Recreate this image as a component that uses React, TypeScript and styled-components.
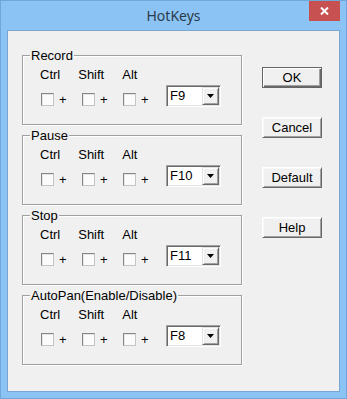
import React from "react";
import styled, { createGlobalStyle } from "styled-components";

const GlobalStyle = createGlobalStyle`
  html, body {
    margin: 0;
    padding: 0;
    background: #ffffff;
  }
  body {
    font-family: "Liberation Sans", Arial, sans-serif;
    font-size: 13px;
    color: #000;
  }
  * {
    box-sizing: border-box;
  }
`;

const groups = [
  { title: "Record", key: "F9" },
  { title: "Pause", key: "F10" },
  { title: "Stop", key: "F11" },
  { title: "AutoPan(Enable/Disable)", key: "F8" },
];

const buttons = ["OK", "Cancel", "Default", "Help"];

function App() {
  return (
    <>
      <GlobalStyle />
      <Window>
        <TitleBar>
          <Title>HotKeys</Title>
          <CloseButton aria-label="Close">
            <svg width="9" height="8" viewBox="0 0 9 8">
              <path d="M1 0.5 L8 7.5 M8 0.5 L1 7.5" stroke="#fff" strokeWidth="2" />
            </svg>
          </CloseButton>
        </TitleBar>

        <Client>
          <Groups>
            {groups.map((g) => (
              <Group key={g.title}>
                <Legend>{g.title}</Legend>
                <Labels>
                  <span>Ctrl</span>
                  <span>Shift</span>
                  <span>Alt</span>
                </Labels>
                <Controls>
                  {["ctrl", "shift", "alt"].map((m) => (
                    <CheckUnit key={m}>
                      <Check type="checkbox" />
                      <Plus>+</Plus>
                    </CheckUnit>
                  ))}
                  <Combo>
                    <ComboText>{g.key}</ComboText>
                    <DropButton>
                      <svg width="7" height="4" viewBox="0 0 7 4">
                        <path d="M0 0 H7 L3.5 4 Z" fill="#000" />
                      </svg>
                    </DropButton>
                  </Combo>
                </Controls>
              </Group>
            ))}
          </Groups>

          <Buttons>
            {buttons.map((b) => (
              <Button key={b} $default={b === "OK"}>
                {b}
              </Button>
            ))}
          </Buttons>
        </Client>
      </Window>
    </>
  );
}

const Window = styled.div`
  width: 347px;
  height: 399px;
  display: flex;
  flex-direction: column;
  background: #8bc4f4;
  border: 1px solid #70a6d8;
`;

const TitleBar = styled.div`
  height: 29px;
  display: grid;
  grid-template-columns: 1fr auto 1fr;
  align-items: start;
`;

const Title = styled.div`
  grid-column: 2;
  padding-top: 5px;
  font-family: "Noto Sans", "Open Sans", sans-serif;
  font-size: 14px;
  line-height: 19px;
  color: #2b3a4c;
`;

const CloseButton = styled.div`
  grid-column: 3;
  justify-self: end;
  margin-right: 6px;
  width: 31px;
  height: 20px;
  background: #c75050;
  display: flex;
  align-items: center;
  justify-content: center;
`;

const Client = styled.div`
  flex: 1;
  margin: 0 6px 6px;
  background: #f0f0f0;
  border: 1px solid #78a6d2;
  display: flex;
  align-items: flex-start;
  padding: 17px 0 0 14px;
`;

const Groups = styled.div`
  width: 220px;
  display: flex;
  flex-direction: column;
  gap: 3px;
`;

const Group = styled.fieldset`
  margin: 0;
  min-width: 0;
  padding: 4px 0 17px 7px;
  border: 1px solid #a0a0a0;
  box-shadow: inset 1px 1px 0 #fff, 1px 1px 0 #fff;
`;

const Legend = styled.legend`
  padding: 0 1px;
  margin: 0;
  line-height: 15px;
  background: #f0f0f0;
`;

const Labels = styled.div`
  display: flex;
  gap: 18px;
  margin-left: 10px;
  line-height: 15px;
`;

const Controls = styled.div`
  display: flex;
  align-items: flex-start;
  margin-top: 3px;
  margin-left: 11px;
`;

const CheckUnit = styled.div`
  width: 41px;
  margin-top: 8px;
  display: flex;
  align-items: center;
  gap: 5px;
`;

const Check = styled.input`
  appearance: none;
  margin: 0;
  width: 13px;
  height: 13px;
  background: #fbfbfb;
  border: 1px solid;
  border-color: #858585 #c4c4c4 #c4c4c4 #858585;
  box-shadow: inset 1px 1px 0 #e6e6e6;
`;

const Plus = styled.span`
  line-height: 13px;
  color: #000;
`;

const Combo = styled.div`
  margin-left: 2px;
  width: 55px;
  height: 22px;
  padding: 1px;
  display: flex;
  background: #fff;
  border: 1px solid;
  border-color: #a0a0a0 #fff #fff #a0a0a0;
  box-shadow: inset 1px 1px 0 #696969, inset -1px -1px 0 #e3e3e3;
`;

const ComboText = styled.span`
  padding-left: 2px;
  line-height: 18px;
`;

const DropButton = styled.div`
  margin-left: auto;
  width: 17px;
  height: 18px;
  background: #f0f0f0;
  border: 1px solid;
  border-color: #e3e3e3 #696969 #696969 #e3e3e3;
  box-shadow: inset 1px 1px 0 #fff, inset -1px -1px 0 #a0a0a0;
  display: flex;
  align-items: center;
  justify-content: center;
`;

const Buttons = styled.div`
  display: flex;
  flex-direction: column;
  gap: 29px;
  margin-left: 20px;
  margin-top: 19px;
`;

const Button = styled.div<{ $default?: boolean }>`
  width: 60px;
  height: 21px;
  display: flex;
  align-items: center;
  justify-content: center;
  background: #f0f0f0;
  border: 1px solid;
  border-color: ${(p) => (p.$default ? "#646464" : "#fff #696969 #696969 #fff")};
  box-shadow: ${(p) =>
    p.$default
      ? "inset 1px 1px 0 #fff, inset -1px -1px 0 #696969, inset -2px -2px 0 #a0a0a0"
      : "inset 1px 1px 0 #f8f8f8, inset -1px -1px 0 #a0a0a0"};
`;

export default App;
